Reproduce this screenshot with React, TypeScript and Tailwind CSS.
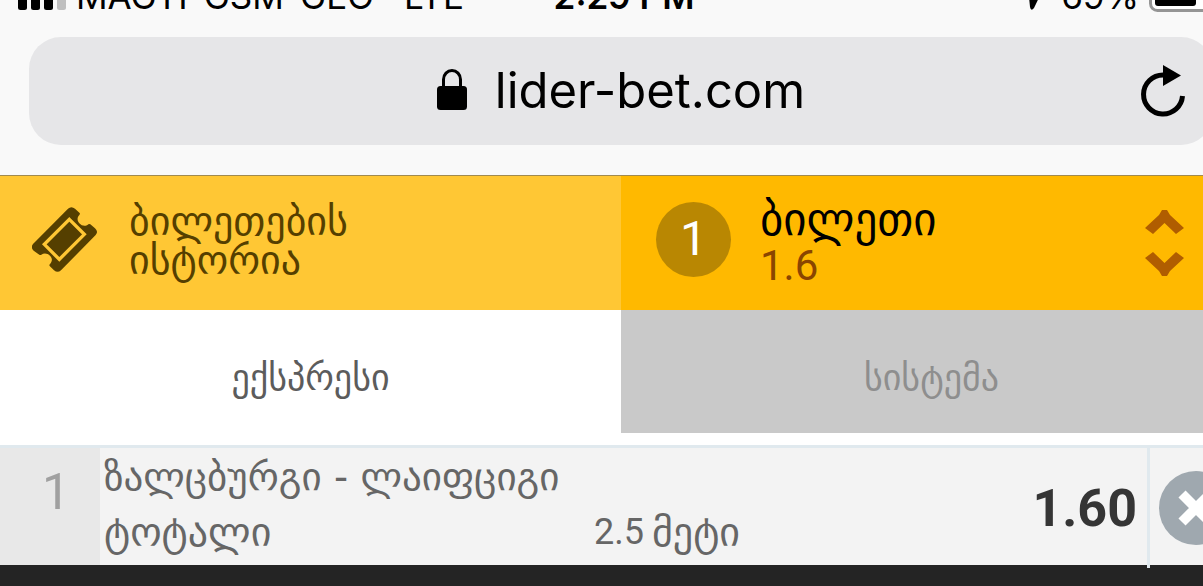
function SignalIcon() {
  return (
    <svg className="h-[30px] w-[48px] shrink-0" viewBox="0 0 48 30" aria-hidden="true">
      <rect x="0" y="18" width="9" height="12" rx="2.5" />
      <rect x="13" y="12" width="9" height="18" rx="2.5" />
      <rect x="26" y="6" width="9" height="24" rx="2.5" />
      <rect x="39" y="0" width="9" height="30" rx="2.5" fill="#bfbfbf" />
    </svg>
  );
}

function BatteryIcon() {
  return (
    <svg className="h-[34px] w-[81px] shrink-0" viewBox="0 0 81 34" aria-hidden="true">
      <rect x="1.5" y="1.5" width="72" height="31" rx="7" fill="#fff" stroke="#959595" strokeWidth="3" />
      <rect x="6" y="6" width="41" height="22" rx="3" />
      <path d="M76 11c3 1 5 3 5 6s-2 5-5 6z" fill="#959595" />
    </svg>
  );
}

function LocationIcon() {
  return (
    <svg className="h-[27px] w-[27px] shrink-0" viewBox="0 0 27 27" aria-hidden="true">
      <path d="M26 0 14 25q-3 4-4-1L9 14H1q-2-1 0-2z" />
    </svg>
  );
}

function LockIcon() {
  return (
    <svg className="h-[41px] w-[30px]" viewBox="0 0 30 41" aria-hidden="true">
      <path d="M6.500 19V10.500a8.500 9 0 0 1 17 0V19" fill="none" stroke="#000" strokeWidth="3" />
      <rect y="17" width="30" height="24" rx="3.500" />
    </svg>
  );
}

function ReloadIcon() {
  return (
    <svg className="h-[52px] w-[44px]" viewBox="0 0 44 52" aria-hidden="true">
      <path d="M22 10A19.500 19.500 0 1 0 41.500 31" fill="none" stroke="#000" strokeWidth="5" />
      <path d="M22 0 40 10.500 22 21z" />
    </svg>
  );
}

function TicketIcon() {
  return (
    <svg className="h-[65px] w-[65px]" viewBox="0 0 195 195" aria-hidden="true">
      <path
        d="M108 5q10-9 21 0l14 13q2 3-1 6c-8 8-6 18 0 25 8 9 19 10 27 3q3-2 6 0l14 12q11 10 2 20L87 190q-10 9-21 0l-13-13q-2-3 1-6c8-8 7-18 0-25s-18-9-26-3q-3 2-6 0L5 131q-10-10-2-20z"
        fill="#553f00"
      />
      <path d="m112 37 45 45-75 75-45-45z" fill="none" stroke="#ffc734" strokeWidth="10" />
    </svg>
  );
}

function SortIcon() {
  return (
    <svg className="h-[66px] w-[40px] shrink-0" viewBox="0 0 40 66" aria-hidden="true">
      <path
        d="M17 0h5l3 5 14 13-8 6-11.500-11L8 24l-8-6L14 5zM8 42l11.500 11L31 42l8 6-14 13-3 5h-5l-3-5L0 48z"
        fill="#b05d00"
      />
    </svg>
  );
}

function RemoveIcon() {
  return (
    <svg className="size-[74px] shrink-0" viewBox="0 0 74 74" aria-hidden="true">
      <circle cx="37" cy="37" r="37" fill="#9fa8af" />
      <path d="m23 23 28 28M51 23 23 51" stroke="#fff" strokeWidth="10" />
    </svg>
  );
}

export default function App() {
  return (
    <div className="overflow-hidden bg-white font-['DejaVu_Sans',sans-serif]">
      <div className="-mr-[39px]">
        <header className="border-b border-[#a08a50] bg-[#f9f9f9] pb-[30px] font-['Inter',sans-serif] text-black">
          <div className="flex h-[37px] items-end justify-between overflow-hidden pr-3 pb-[23px] pl-[18px] text-[35px] leading-[36px] whitespace-nowrap">
            <div className="flex flex-1 items-end gap-[10px]">
              <div className="pb-1">
                <SignalIcon />
              </div>
              <span>MAGTI-GSM-GEO</span>
              <span className="pl-5">LTE</span>
            </div>
            <time className="font-semibold">2:29 PM</time>
            <div className="flex flex-1 items-end justify-end gap-[10px]">
              <div className="pr-1 pb-1">
                <LocationIcon />
              </div>
              <span>69%</span>
              <div className="pb-[2px]">
                <BatteryIcon />
              </div>
            </div>
          </div>
          <div className="mx-[29px] flex h-[108px] items-center rounded-[32px] bg-[#e6e6e8] px-7">
            <div className="w-[44px]" />
            <a href="#" className="flex flex-1 items-center justify-center gap-7 text-[49px] leading-[60px]">
              <span className="pb-1">
                <LockIcon />
              </span>
              <span>lider-bet.com</span>
            </a>
            <button type="button" aria-label="Reload">
              <ReloadIcon />
            </button>
          </div>
        </header>

        <nav className="grid h-[134px] grid-cols-2">
          <a href="#" className="flex items-center gap-8 bg-[#ffc734] pl-8 text-[40px] leading-[39px] text-[#553f00]">
            <span className="mb-2">
              <TicketIcon />
            </span>
            <span className="mb-1">
              ბილეთების
              <br />
              ისტორია
            </span>
          </a>
          <button type="button" className="flex items-center bg-[#ffb900] pr-[57px] pl-[35px] text-left">
            <span className="mb-2 flex size-[75px] items-center justify-center rounded-full bg-[#b98702] font-['Roboto',sans-serif] text-[48px] text-white">
              1
            </span>
            <span className="flex flex-1 flex-col pl-[29px] leading-[46px]">
              <span className="text-[45px] text-black">ბილეთი</span>
              <span className="font-['Roboto',sans-serif] text-[42px] text-[#8a4500]">1.6</span>
            </span>
            <SortIcon />
          </button>
        </nav>

        <div className="grid h-[123px] grid-cols-2 text-[36px]">
          <button type="button" className="bg-white pt-3 text-[#5c5c5c]">
            ექსპრესი
          </button>
          <button type="button" className="bg-[#c9c9c9] pt-3 text-[#8e8e8e]">
            სისტემა
          </button>
        </div>

        <main className="mt-3 flex h-[120px] border-t-[3px] border-[#e0e9ee] bg-[#f3f3f3] text-[#666]">
          <div className="w-[100px] bg-[#e8e8e8] pt-4 pr-[30px] text-right font-['Roboto',sans-serif] text-[50px] leading-[56px] text-[#a0a0a0]">
            1
          </div>
          <div className="flex-1 pl-1 whitespace-nowrap">
            <p className="text-[39px] leading-[57px]">ზალცბურგი - ლაიფციგი</p>
            <div className="flex text-[40px] leading-[54px]">
              <span className="w-[490px]">ტოტალი</span>
              <span className="flex gap-2">
                <span className="font-['Roboto',sans-serif] text-[36px]">2.5</span>
                <span>მეტი</span>
              </span>
            </div>
          </div>
          <strong className="flex items-center pt-1 pr-[10px] font-['Roboto',sans-serif] text-[52px] text-[#353535]">1.60</strong>
          <div className="-mb-[3px] w-[3px] bg-[#e0e9ee]" />
          <button type="button" aria-label="Remove" className="flex w-[92px] items-center pt-[2px] pl-[9px]">
            <RemoveIcon />
          </button>
        </main>
      </div>
      <footer className="h-[21px] bg-[#242424]" />
    </div>
  );
}
